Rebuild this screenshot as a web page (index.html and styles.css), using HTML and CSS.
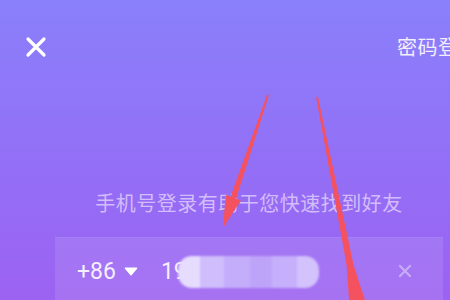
FILE: index.html
```html
<!DOCTYPE html>
<html lang="zh">
<head>
<meta charset="utf-8">
<link rel="stylesheet" href="styles.css">
</head>
<body>
<div class="page">
  <div class="topbar">
    <svg class="close" width="22" height="22" viewBox="0 0 22 22"><path d="M3 3 L19 19 M19 3 L3 19" stroke="#fff" stroke-width="3.2" stroke-linecap="round"/></svg>
    <span class="pw-login">密码登录</span>
  </div>
  <p class="hint">手机号登录有助于您快速找到好友</p>
  <div class="phone-box">
    <div class="phone-row">
      <span class="code">+86</span>
      <svg class="caret" width="14" height="9" viewBox="0 0 14 9"><path d="M1.5 1.2 H12.5 L7 7.8 Z" fill="#fff" stroke="#fff" stroke-width="1.5" stroke-linejoin="round"/></svg>
      <span class="number">19<span class="mosaic"><i class="m1"></i><i class="m2"></i><i class="m3"></i><i class="m4"></i><i class="m5"></i><i class="m6"></i></span></span>
      <svg class="clear" width="14" height="14" viewBox="0 0 14 14"><path d="M2 2 L12 12 M12 2 L2 12" stroke="#fff" stroke-width="2.2" stroke-linecap="round"/></svg>
    </div>
  </div>
  <svg class="arrows" width="450" height="300" viewBox="0 0 450 300">
    <polygon points="267.1,94.7 268.9,95.3 236.1,198.7 240.9,200.3 223,228 225.7,195.1 230.5,196.7" fill="#f5525f"/>
    <polygon points="318,97 339.8,200 353.6,265 360,285 365,300 349,300 348,285 346.6,265 334.8,200 316,97" fill="#f5525f"/>
  </svg>
</div>
</body>
</html>
```
FILE: styles.css
```css
html, body {
  margin: 0;
  padding: 0;
}
body {
  width: 450px;
  height: 300px;
  overflow: hidden;
  font-family: "Noto Sans CJK SC", "Noto Sans", sans-serif;
}
.page {
  position: relative;
  width: 450px;
  height: 300px;
  overflow: hidden;
  background: linear-gradient(180deg, #8a80fb 0%, #936ff6 55%, #9c62f1 100%);
}
.topbar {
  display: flex;
  justify-content: space-between;
  align-items: center;
  height: 22px;
  padding: 36px 0 0 25px;
}
.close {
  display: block;
}
.pw-login {
  width: 53px;
  white-space: nowrap;
  font-size: 20px;
  line-height: 22px;
  color: #f2edff;
  letter-spacing: 0.5px;
}
.hint {
  margin: 131px 0 0 0;
  padding-left: 48px;
  text-align: center;
  font-size: 20px;
  line-height: 28px;
  letter-spacing: 0.5px;
  color: rgba(235, 222, 255, 0.72);
  white-space: nowrap;
}
.phone-box {
  margin: 20px 7px 0 55px;
  height: 80px;
  background: rgba(255, 255, 255, 0.1);
  border-top: 1px solid rgba(255, 255, 255, 0.06);
}
.phone-row {
  display: flex;
  align-items: center;
  height: 66px;
  padding-left: 22px;
}
.code {
  font-family: Roboto, "Noto Sans", sans-serif;
  font-size: 23px;
  color: #f4eeff;
}
.caret {
  margin-left: 8px;
}
.number {
  position: relative;
  margin-left: 23px;
  font-family: Roboto, "Noto Sans", sans-serif;
  font-size: 23px;
  color: #f4eeff;
}
.mosaic {
  position: absolute;
  left: 17px;
  top: -2px;
  width: 141px;
  height: 32px;
  display: flex;
  border-radius: 14px;
  overflow: hidden;
  filter: blur(1px);
}
.mosaic i {
  display: block;
  height: 100%;
}
.m1 { width: 22px; background: #e6dcfe; }
.m2 { width: 24px; background: #d0bdfc; }
.m3 { width: 26px; background: #c4adfa; }
.m4 { width: 22px; background: #bea4f9; }
.m5 { width: 25px; background: #c6b0fb; }
.m6 { width: 22px; background: #d3c2fc; }
.clear {
  margin-left: auto;
  margin-right: 31px;
  opacity: 0.4;
}
.arrows {
  position: absolute;
  left: 0;
  top: 0;
  filter: blur(0.4px);
}
```
